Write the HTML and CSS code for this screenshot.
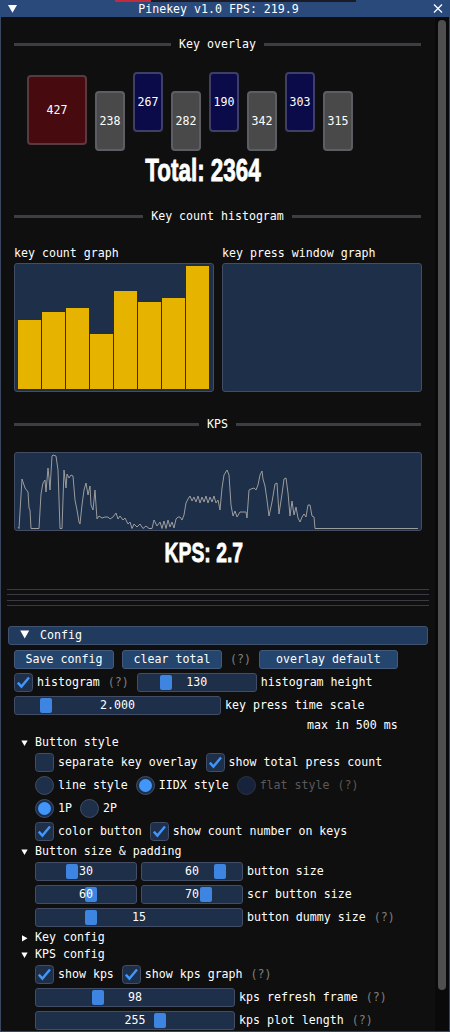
FILE: index.html
```html
<!DOCTYPE html>
<html>
<head>
<meta charset="utf-8">
<title>Pinekey</title>
<link rel="stylesheet" href="styles.css">
</head>
<body>
<div class="window">
  <div class="strip"><span class="strip-red"></span></div>
  <div class="titlebar">
    <svg class="tb-collapse" width="9" height="8" viewBox="0 0 9 8"><polygon points="0,0 9,0 4.5,7.8" fill="#ffffff"/></svg>
    <div class="title">Pinekey v1.0 FPS: 219.9</div>
    <svg class="tb-close" width="10" height="9" viewBox="0 0 10 9"><path d="M1 0.5 L9 8.5 M9 0.5 L1 8.5" stroke="#ffffff" stroke-width="1.3" fill="none"/></svg>
  </div>
  <div class="main">
    <div class="content">
      <div class="sep sep-first"><span class="sep-line"></span><span class="sep-label">Key overlay</span><span class="sep-line"></span></div>
      <div class="keys">
        <div class="key key-scr">427</div>
        <div class="key key-white">238</div>
        <div class="key key-blue">267</div>
        <div class="key key-white">282</div>
        <div class="key key-blue">190</div>
        <div class="key key-white">342</div>
        <div class="key key-blue">303</div>
        <div class="key key-white">315</div>
      </div>
      <div class="total"><span class="big big-total">Total: 2364</span></div>

      <div class="sep"><span class="sep-line"></span><span class="sep-label">Key count histogram</span><span class="sep-line"></span></div>
      <div class="graphs">
        <div class="graph-col">
          <div class="graph-label">key count graph</div>
          <div class="frame hist-frame">
            <div class="bars">
              <div class="bar" style="height:68.6px"></div>
              <div class="bar" style="height:76.9px"></div>
              <div class="bar" style="height:81.2px"></div>
              <div class="bar" style="height:54.7px"></div>
              <div class="bar" style="height:98.5px"></div>
              <div class="bar" style="height:87.3px"></div>
              <div class="bar" style="height:90.7px"></div>
              <div class="bar" style="height:123px"></div>
            </div>
          </div>
        </div>
        <div class="graph-col">
          <div class="graph-label">key press window graph</div>
          <div class="frame hist-frame"></div>
        </div>
      </div>

      <div class="sep sep-kps"><span class="sep-line"></span><span class="sep-label">KPS</span><span class="sep-line"></span></div>
      <div class="frame kps-frame">
        <svg class="kps-plot" width="406" height="77" viewBox="15 453 406 77">
          <polyline fill="none" stroke="#9c9c9c" stroke-width="1" points="18,527 19,528.5 22,479 25,488 28,492 29,508 30,510 31,528.5 39,528.5 41,494 43,483 45,480 46,492 48,468 49,478 50,490 52,456 53,455 56,456 58,470 60,528.5 62,528.5 64,470 66,488 67,474 69,478 71,475 73,476 75,500 77,510 79,522 80,524 82,505 84,490 86,483 88,495 90,486 91,505 93,510 95,490 96,505 97,519 99,516 102,518 105,517 108,517 110,519 113,517 116,513 118,519 120,516 123,520 125,518 128,524 130,522 132,528.5 134,524 137,527 140,524 143,528.5 146,526 149,528.5 152,528.5 154,520 157,526 160,522 162,528.5 164,521 166,528.5 168,520 170,527 172,522 174,528 176,519 178,517 180,517 182,520 184,515 186,503 188,499 190,496 192,501 194,497 196,502 198,496 200,503 202,497 204,502 206,496 208,503 210,497 212,502 214,496 216,503 218,500 220,510 222,488 224,475 227,470 229,475 231,505 233,516 235,511 237,517 240,512 243,512 246,512 247,518 249,490 251,489 254,488 256,490 258,485 260,475 262,471 263,479 265,486 267,500 269,516 272,502 275,484 277,483 279,514 282,494 284,479 286,478 288,493 290,516 292,501 294,515 296,507 298,518 300,522 302,517 304,514 306,517 308,505 310,505 312,516 314,517 315,528.5 418,528.5"/>
        </svg>
      </div>
      <div class="kps-text"><span class="big big-kps">KPS: 2.7</span></div>

      <div class="hlines">
        <div class="hline"></div>
        <div class="hline hl-2"></div>
        <div class="hline hl-3"></div>
        <div class="hline hl-4"></div>
      </div>

      <div class="cfg-header">
        <svg class="hdr-arrow" width="32" height="19" viewBox="0 0 32 19"><polygon points="12.2,5.6 21.2,5.6 16.7,13.4" fill="#ffffff"/></svg>
        <span>Config</span>
      </div>

      <div class="row row-first">
        <div class="btn btn-save">Save config</div>
        <div class="btn btn-clear">clear total</div>
        <span class="help">(?)</span>
        <div class="btn btn-overlay">overlay default</div>
      </div>

      <div class="row">
        <div class="check">
          <svg class="cb" width="19" height="19" viewBox="0 0 19 19"><rect x="0.5" y="0.5" width="18" height="18" rx="3" fill="#1d2f49" stroke="#434d65"/><polyline points="3.8,9.6 7.4,13.6 15,4.6" fill="none" stroke="#4296fa" stroke-width="2.4" stroke-linejoin="miter"/></svg>
          <span>histogram</span>
        </div>
        <span class="help">(?)</span>
        <div class="sgroup">
          <div class="slider w120"><span class="grab" style="left:22px"></span><span class="sval">130</span></div>
          <span>histogram height</span>
        </div>
      </div>

      <div class="row">
        <div class="sgroup">
          <div class="slider w207"><span class="grab" style="left:25px"></span><span class="sval">2.000</span></div>
          <span>key press time scale</span>
        </div>
      </div>

      <div class="textrow maxrow">max in 500 ms</div>

      <div class="tree">
        <svg class="tree-arrow" width="21" height="13" viewBox="0 0 21 13"><polygon points="7.35,4.6 13.65,4.6 10.5,10.1" fill="#ffffff"/></svg>
        <span>Button style</span>
      </div>

      <div class="row indent">
        <div class="check">
          <svg class="cb" width="19" height="19" viewBox="0 0 19 19"><rect x="0.5" y="0.5" width="18" height="18" rx="3" fill="#1d2f49" stroke="#434d65"/></svg>
          <span>separate key overlay</span>
        </div>
        <div class="check">
          <svg class="cb" width="19" height="19" viewBox="0 0 19 19"><rect x="0.5" y="0.5" width="18" height="18" rx="3" fill="#1d2f49" stroke="#434d65"/><polyline points="3.8,9.6 7.4,13.6 15,4.6" fill="none" stroke="#4296fa" stroke-width="2.4"/></svg>
          <span>show total press count</span>
        </div>
      </div>

      <div class="row indent">
        <div class="check">
          <svg class="rb" width="19" height="19" viewBox="0 0 19 19"><circle cx="9.5" cy="9.5" r="9" fill="#1d2f49" stroke="#434d65"/></svg>
          <span>line style</span>
        </div>
        <div class="check">
          <svg class="rb" width="19" height="19" viewBox="0 0 19 19"><circle cx="9.5" cy="9.5" r="9" fill="#1d2f49" stroke="#434d65"/><circle cx="9.5" cy="9.5" r="6.5" fill="#4296fa"/></svg>
          <span>IIDX style</span>
        </div>
        <div class="check">
          <svg class="rb" width="19" height="19" viewBox="0 0 19 19"><circle cx="9.5" cy="9.5" r="9" fill="#17233a" stroke="#2b3244"/></svg>
          <span class="disabled">flat style</span>
        </div>
        <span class="disabled">(?)</span>
      </div>

      <div class="row indent">
        <div class="check">
          <svg class="rb" width="19" height="19" viewBox="0 0 19 19"><circle cx="9.5" cy="9.5" r="9" fill="#1d2f49" stroke="#434d65"/><circle cx="9.5" cy="9.5" r="6.5" fill="#4296fa"/></svg>
          <span>1P</span>
        </div>
        <div class="check">
          <svg class="rb" width="19" height="19" viewBox="0 0 19 19"><circle cx="9.5" cy="9.5" r="9" fill="#1d2f49" stroke="#434d65"/></svg>
          <span>2P</span>
        </div>
      </div>

      <div class="row indent">
        <div class="check">
          <svg class="cb" width="19" height="19" viewBox="0 0 19 19"><rect x="0.5" y="0.5" width="18" height="18" rx="3" fill="#1d2f49" stroke="#434d65"/><polyline points="3.8,9.6 7.4,13.6 15,4.6" fill="none" stroke="#4296fa" stroke-width="2.4"/></svg>
          <span>color button</span>
        </div>
        <div class="check">
          <svg class="cb" width="19" height="19" viewBox="0 0 19 19"><rect x="0.5" y="0.5" width="18" height="18" rx="3" fill="#1d2f49" stroke="#434d65"/><polyline points="3.8,9.6 7.4,13.6 15,4.6" fill="none" stroke="#4296fa" stroke-width="2.4"/></svg>
          <span>show count number on keys</span>
        </div>
      </div>

      <div class="tree">
        <svg class="tree-arrow" width="21" height="13" viewBox="0 0 21 13"><polygon points="7.35,4.6 13.65,4.6 10.5,10.1" fill="#ffffff"/></svg>
        <span>Button size &amp; padding</span>
      </div>

      <div class="row indent">
        <div class="sgroup">
          <div class="slider w102"><span class="grab" style="left:30px"></span><span class="sval">30</span></div>
          <div class="slider w102"><span class="grab" style="left:72px"></span><span class="sval">60</span></div>
          <span>button size</span>
        </div>
      </div>

      <div class="row indent">
        <div class="sgroup">
          <div class="slider w102"><span class="grab" style="left:49px"></span><span class="sval">60</span></div>
          <div class="slider w102"><span class="grab" style="left:58px"></span><span class="sval">70</span></div>
          <span>scr button size</span>
        </div>
      </div>

      <div class="row indent">
        <div class="sgroup">
          <div class="slider w208"><span class="grab" style="left:49px"></span><span class="sval">15</span></div>
          <span>button dummy size</span>
        </div>
        <span class="help">(?)</span>
      </div>

      <div class="tree">
        <svg class="tree-arrow" width="21" height="13" viewBox="0 0 21 13"><polygon points="8,4.2 8,10.5 13.5,7.35" fill="#ffffff"/></svg>
        <span>Key config</span>
      </div>

      <div class="tree">
        <svg class="tree-arrow" width="21" height="13" viewBox="0 0 21 13"><polygon points="7.35,4.6 13.65,4.6 10.5,10.1" fill="#ffffff"/></svg>
        <span>KPS config</span>
      </div>

      <div class="row indent">
        <div class="check">
          <svg class="cb" width="19" height="19" viewBox="0 0 19 19"><rect x="0.5" y="0.5" width="18" height="18" rx="3" fill="#1d2f49" stroke="#434d65"/><polyline points="3.8,9.6 7.4,13.6 15,4.6" fill="none" stroke="#4296fa" stroke-width="2.4"/></svg>
          <span>show kps</span>
        </div>
        <div class="check">
          <svg class="cb" width="19" height="19" viewBox="0 0 19 19"><rect x="0.5" y="0.5" width="18" height="18" rx="3" fill="#1d2f49" stroke="#434d65"/><polyline points="3.8,9.6 7.4,13.6 15,4.6" fill="none" stroke="#4296fa" stroke-width="2.4"/></svg>
          <span>show kps graph</span>
        </div>
        <span class="help">(?)</span>
      </div>

      <div class="row indent">
        <div class="sgroup">
          <div class="slider w200"><span class="grab" style="left:56px"></span><span class="sval">98</span></div>
          <span>kps refresh frame</span>
        </div>
        <span class="help">(?)</span>
      </div>

      <div class="row indent">
        <div class="sgroup">
          <div class="slider w200"><span class="grab" style="left:118px"></span><span class="sval">255</span></div>
          <span>kps plot length</span>
        </div>
        <span class="help">(?)</span>
      </div>
    </div>
    <div class="scrollcol"><div class="scrollgrab"></div></div>
  </div>
</div>
</body>
</html>
```

FILE: styles.css
```css
* {
  box-sizing: border-box;
  margin: 0;
  padding: 0;
}

html, body {
  width: 450px;
  height: 1032px;
  overflow: hidden;
  background: #0f0f0f;
}

body {
  font-family: "DejaVu Sans Mono", "Liberation Mono", monospace;
  font-size: 11.6px;
  line-height: 13px;
  color: #ffffff;
  white-space: nowrap;
}

.window {
  position: relative;
  width: 450px;
  height: 1032px;
  background: #0f0f0f;
  display: flex;
  flex-direction: column;
}

.window::after {
  content: "";
  position: absolute;
  left: 0;
  top: 17px;
  right: 0;
  bottom: 0;
  border: 1px solid #3a4560;
  border-top: none;
  pointer-events: none;
}

.strip {
  position: absolute;
  left: 115px;
  top: 0;
  width: 241px;
  height: 2px;
  background: #1b1b26;
  z-index: 2;
}

.strip-red {
  display: block;
  width: 36px;
  height: 2px;
  background: #c42a3e;
}

.titlebar {
  height: 17px;
  flex: none;
  background: #294a7a;
  display: flex;
  align-items: center;
  padding-left: 8px;
  padding-right: 7px;
}

.tb-collapse {
  flex: none;
}

.title {
  flex: 1;
  text-align: center;
  padding-right: 13px;
  height: 13px;
  margin-top: 1px;
}

.tb-close {
  flex: none;
}

.main {
  flex: 1;
  display: flex;
  min-height: 0;
}

.content {
  width: 435px;
  flex: none;
  overflow: hidden;
}

.scrollcol {
  flex: 1;
  background: #0a0a0a;
  padding-top: 3px;
  padding-left: 3px;
}

.scrollgrab {
  width: 8px;
  height: 970px;
  border-radius: 4px;
  background: #4f4f4f;
}

/* separators */
.sep {
  display: flex;
  align-items: center;
  gap: 8px;
  height: 13px;
  margin-left: 14px;
  margin-right: 14px;
}

.sep-line {
  flex: 1;
  height: 3px;
  background: #3d3d46;
}

.sep-first {
  margin-top: 21px;
}

/* key overlay */
.keys {
  display: flex;
  align-items: flex-start;
  gap: 8px;
  margin-top: 21px;
  margin-left: 27px;
  height: 79px;
}

.key {
  display: flex;
  align-items: center;
  justify-content: center;
  border-radius: 4px;
  border: 2px solid;
}

.key-scr {
  width: 60px;
  height: 70px;
  margin-top: 3px;
  background: #470b0f;
  border-color: #5a3a41;
}

.key-white {
  width: 30px;
  height: 60px;
  margin-top: 19px;
  background: #494949;
  border-color: #5d5d65;
}

.key-blue {
  width: 30px;
  height: 60px;
  background: #0b0b49;
  border-color: #3e3e66;
}

.total {
  height: 59px;
  padding-top: 5px;
  width: 407px;
  text-align: center;
}

.big {
  display: inline-block;
  font-family: "Liberation Sans", Arial, sans-serif;
  font-weight: bold;
  color: #ffffff;
  -webkit-text-stroke: 0.8px #ffffff;
}

.big-total {
  font-size: 30.7px;
  line-height: 30px;
  transform: scaleX(0.73);
}

/* graphs */
.graphs {
  display: flex;
  gap: 8px;
  margin-top: 24px;
  margin-left: 14px;
}

.graph-col {
  width: 200px;
}

.graph-label {
  height: 13px;
}

.frame {
  background: #1d2f49;
  border: 1px solid #434d65;
  border-radius: 3px;
}

.hist-frame {
  margin-top: 3px;
  height: 129px;
  padding: 2px 3px;
}

.bars {
  height: 123px;
  display: flex;
  align-items: flex-end;
}

.bar {
  width: 23px;
  margin-right: 1px;
  background: #e6b300;
}

.sep-kps {
  margin-top: 26px;
}

.kps-frame {
  margin-top: 21px;
  margin-left: 14px;
  width: 408px;
  height: 79px;
}

.kps-plot {
  display: block;
}

.kps-text {
  height: 58px;
  padding-top: 8px;
  width: 408px;
  text-align: center;
}

.big-kps {
  font-size: 28px;
  line-height: 28px;
  transform: scaleX(0.69);
}

.hlines {
  margin-left: 7px;
  width: 422px;
}

.hline {
  height: 1px;
  background: #3a3a42;
}

.hl-2 { margin-top: 4px; }
.hl-3 { margin-top: 5px; }
.hl-4 { margin-top: 4px; }

/* config */
.cfg-header {
  margin-top: 20px;
  margin-left: 8px;
  width: 420px;
  height: 19px;
  background: #213b5e;
  border: 1px solid #3f5270;
  border-radius: 3px;
  display: flex;
  align-items: center;
}

.hdr-arrow {
  flex: none;
  margin-left: -1px;
  margin-top: -2px;
}

.row {
  display: flex;
  align-items: center;
  gap: 8px;
  height: 19px;
  margin-top: 4px;
  padding-left: 14px;
}

.row.row-first {
  margin-top: 5px;
}

.row.indent {
  padding-left: 35px;
}

.textrow {
  height: 13px;
  margin-top: 4px;
}

.maxrow {
  padding-left: 307px;
}

.tree {
  display: flex;
  align-items: center;
  height: 13px;
  margin-top: 4px;
  padding-left: 14px;
}

.tree-arrow {
  flex: none;
}

.btn {
  height: 19px;
  background: #24456d;
  border: 1px solid #45597a;
  border-radius: 3px;
  display: flex;
  align-items: center;
  justify-content: center;
}

.btn-save { width: 100px; }
.btn-clear { width: 100px; }
.btn-overlay { width: 139px; }

.help {
  color: #808080;
}

.disabled {
  color: #5a5a5a;
}

.check {
  display: flex;
  align-items: center;
  gap: 4px;
}

.cb, .rb {
  flex: none;
  display: block;
}

.sgroup {
  display: flex;
  align-items: center;
  gap: 4px;
}

.slider {
  position: relative;
  height: 19px;
  background: #1d2f49;
  border: 1px solid #434d65;
  border-radius: 3px;
  display: flex;
  align-items: center;
  justify-content: center;
}

.w102 { width: 102px; }
.w120 { width: 120px; }
.w200 { width: 200px; }
.w207 { width: 207px; }
.w208 { width: 208px; }

.grab {
  position: absolute;
  top: 1px;
  width: 12px;
  height: 15px;
  border-radius: 2px;
  background: #3d85e0;
}

.sval {
  position: relative;
}
```
